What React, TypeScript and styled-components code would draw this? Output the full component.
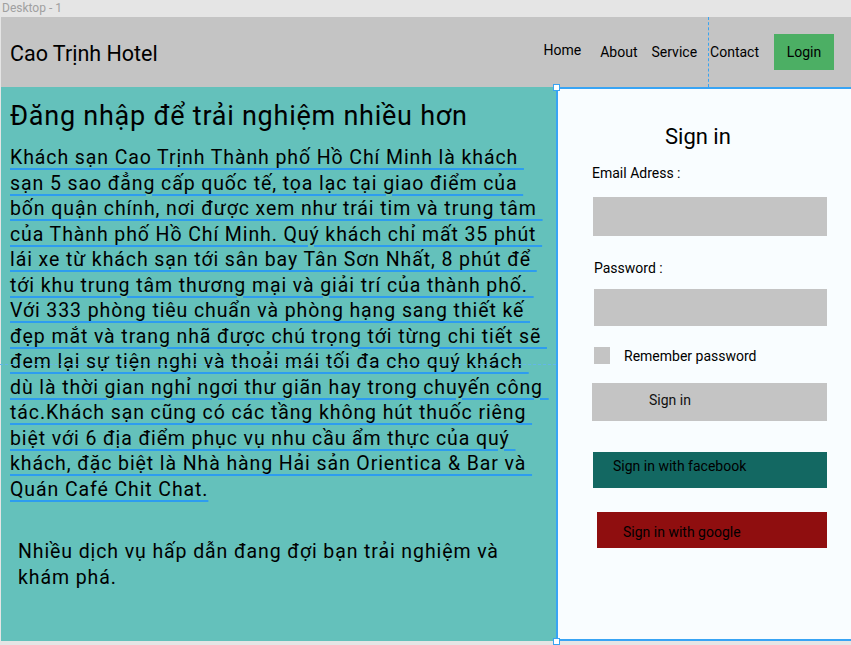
import React from "react";
import styled, { createGlobalStyle } from "styled-components";

const Global = createGlobalStyle`
  html, body { margin: 0; padding: 0; background: #e5e5e5; }
  body { font-family: Roboto, "Noto Sans", sans-serif; color: #000; }
  * { box-sizing: border-box; }
`;

const Canvas = styled.div`
  width: 851px;
  height: 645px;
  position: relative;
  overflow: hidden;
  background: #e5e5e5;
`;

const CanvasLabel = styled.div`
  height: 17px;
  padding-left: 2px;
  font-size: 12px;
  line-height: 17px;
  color: #a0a0a0;
`;

const Frame = styled.div`
  margin-left: 1px;
  width: 850px;
  display: flex;
  flex-direction: column;
`;

const Header = styled.header`
  height: 70px;
  background: #c4c4c4;
  display: flex;
  align-items: center;
  padding-left: 9px;
  padding-right: 17px;
`;

const Brand = styled.div`
  font-size: 21.5px;
  flex: 1;
  margin-top: 3px;
`;

const Nav = styled.nav`
  display: flex;
  align-items: center;
`;

const NavLink = styled.span<{ $gap: number; $lift?: number }>`
  font-size: 14px;
  margin-left: ${(p) => p.$gap}px;
  position: relative;
  top: ${(p) => -(p.$lift ?? 0)}px;
`;

const LoginButton = styled.button`
  margin-left: 15px;
  width: 60px;
  height: 36px;
  border: none;
  background: #4caf64;
  font-family: inherit;
  font-size: 14px;
  color: #000;
  padding: 0;
`;

const Main = styled.main`
  display: flex;
  height: 554px;
`;

const LeftPanel = styled.section`
  width: 555px;
  background: #64c1bb;
  padding: 13px 0 0 9px;
`;

const Heading = styled.h1`
  margin: 0;
  font-size: 27px;
  letter-spacing: 0.75px;
  font-weight: 400;
  line-height: 32px;
`;

const Paragraph = styled.p<{ $indent?: number; $top: number }>`
  margin: ${(p) => p.$top}px 0 0;
  padding-left: ${(p) => p.$indent ?? 0}px;
  width: ${(p) => (p.$indent ? 520 : 545)}px;
  font-size: 19.5px;
  letter-spacing: 0.9px;
  line-height: 25.5px;
`;

const Marked = styled.span`
  white-space: pre;
  text-decoration: underline;
  text-decoration-color: #2d9cf0;
  text-decoration-thickness: 2px;
  text-underline-offset: 4px;
`;

const RightPanel = styled.section`
  flex: 1;
  background: #f9fdff;
  border: 2px solid #38a4f4;
  border-right: none;
  padding: 35px 24px 0 34px;
  display: flex;
  flex-direction: column;
`;

const FormTitle = styled.h2`
  margin: 0 0 0 73px;
  font-size: 22px;
  font-weight: 400;
  line-height: 26px;
`;

const Label = styled.label<{ $top: number; $left?: number }>`
  display: block;
  margin-top: ${(p) => p.$top}px;
  margin-left: ${(p) => p.$left ?? 0}px;
  font-size: 14px;
  line-height: 16px;
`;

const Input = styled.div<{ $top: number; $left?: number; $h: number }>`
  margin-top: ${(p) => p.$top}px;
  margin-left: ${(p) => p.$left ?? 0}px;
  height: ${(p) => p.$h}px;
  background: #c4c4c4;
  flex: none;
`;

const CheckRow = styled.div`
  display: flex;
  align-items: center;
  margin-top: 21px;
  margin-left: 2px;
  font-size: 14px;
`;

const CheckBox = styled.span`
  width: 16px;
  height: 17px;
  background: #c4c4c4;
  margin-right: 14px;
`;

const ActionButton = styled.div<{
  $bg: string;
  $top: number;
  $left: number;
  $h: number;
  $pad: number;
  $padTop: number;
  $color?: string;
}>`
  flex: none;
  margin-top: ${(p) => p.$top}px;
  margin-left: ${(p) => p.$left}px;
  height: ${(p) => p.$h}px;
  background: ${(p) => p.$bg};
  color: ${(p) => p.$color ?? "#000"};
  font-size: 14px;
  padding-left: ${(p) => p.$pad}px;
  padding-top: ${(p) => p.$padTop}px;
  line-height: 16px;
`;

const Guide = styled.div<{ $vertical?: boolean }>`
  position: absolute;
  ${(p) =>
    p.$vertical
      ? `left: 708px; top: 17px; height: 70px; border-left: 1px dashed #3aa3f0;`
      : `left: 0; top: 364px; width: 556px; border-top: 1px dashed #63b6e8;`}
`;

const Handle = styled.div<{ $top: number }>`
  position: absolute;
  left: 553px;
  top: ${(p) => p.$top}px;
  width: 7px;
  height: 7px;
  background: #fff;
  border: 1px solid #38a4f4;
`;

const para1 = [
  "Khách sạn Cao Trịnh Thành phố Hồ Chí Minh là khách ",
  "sạn 5 sao đẳng cấp quốc tế, tọa lạc tại giao điểm của ",
  "bốn quận chính, nơi được xem như trái tim và trung tâm ",
  "của Thành phố Hồ Chí Minh. Quý khách chỉ mất 35 phút ",
  "lái xe từ khách sạn tới sân bay Tân Sơn Nhất, 8 phút để ",
  "tới khu trung tâm thương mại và giải trí của thành phố. ",
  "Với 333 phòng tiêu chuẩn và phòng hạng sang thiết kế ",
  "đẹp mắt và trang nhã được chú trọng tới từng chi tiết sẽ ",
  "đem lại sự tiện nghi và thoải mái tối đa cho quý khách ",
  "dù là thời gian nghỉ ngơi thư giãn hay trong chuyến công ",
  "tác.Khách sạn cũng có các tầng không hút thuốc riêng ",
  "biệt với 6 địa điểm phục vụ nhu cầu ẩm thực của quý ",
  "khách, đặc biệt là Nhà hàng Hải sản Orientica & Bar và ",
  "Quán Café Chit Chat.",
];

export default function App() {
  return (
    <Canvas>
      <Global />
      <CanvasLabel>Desktop - 1</CanvasLabel>
      <Frame>
        <Header>
          <Brand>Cao Trịnh Hotel</Brand>
          <Nav>
            <NavLink $gap={0} $lift={2}>Home</NavLink>
            <NavLink $gap={19}>About</NavLink>
            <NavLink $gap={14}>Service</NavLink>
            <NavLink $gap={13}>Contact</NavLink>
            <LoginButton>Login</LoginButton>
          </Nav>
        </Header>
        <Main>
          <LeftPanel>
            <Heading>Đăng nhập để trải nghiệm nhiều hơn</Heading>
            <Paragraph $top={13}>
              {para1.map((l, i) => (
                <React.Fragment key={i}>
                  <Marked>{l}</Marked>
                  {i < para1.length - 1 && <br />}
                </React.Fragment>
              ))}
            </Paragraph>
            <Paragraph $indent={8} $top={37}>
              Nhiều dịch vụ hấp dẫn đang đợi bạn trải nghiệm và khám phá.
            </Paragraph>
          </LeftPanel>
          <RightPanel>
            <FormTitle>Sign in</FormTitle>
            <Label $top={15}>Email Adress :</Label>
            <Input $top={16} $left={1} $h={39} />
            <Label $top={24} $left={2}>Password :</Label>
            <Input $top={13} $left={2} $h={37} />
            <CheckRow>
              <CheckBox />
              Remember password
            </CheckRow>
            <ActionButton $bg="#c4c4c4" $top={19} $left={0} $h={38} $pad={57} $padTop={9} $color="#111">
              Sign in
            </ActionButton>
            <ActionButton $bg="#136862" $top={31} $left={1} $h={36} $pad={20} $padTop={6}>
              Sign in with facebook
            </ActionButton>
            <ActionButton $bg="#8f0e0f" $top={24} $left={5} $h={36} $pad={26} $padTop={12}>
              Sign in with google
            </ActionButton>
          </RightPanel>
        </Main>
      </Frame>
      <Guide $vertical />
      <Guide />
      <Handle $top={84} />
      <Handle $top={638} />
    </Canvas>
  );
}
